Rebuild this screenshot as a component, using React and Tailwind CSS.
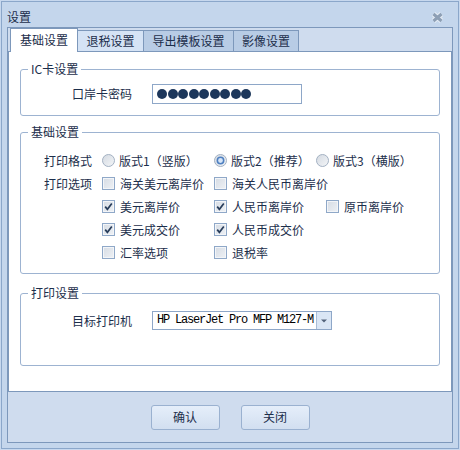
import React from 'react';

// checkbox like the old windows blue theme
const CheckBox = ({ checked }) => (
  <span className="flex h-[13px] w-[13px] shrink-0 items-center justify-center border border-[#8fa8c8] bg-linear-to-br from-[#d6dce4] to-[#eef1f5] shadow-[inset_0_0_0_1px_#f3f5f8]">
    {checked && (
      <svg width="9" height="9" viewBox="0 0 9 9">
        <path d="M1.2 4.6 L3.4 7.3 L7.8 1.4" fill="none" stroke="#283d5b" strokeWidth="1.7" />
      </svg>
    )}
  </span>
);

const Radio = ({ checked }) => (
  <svg width="13" height="13" viewBox="0 0 13 13" className="shrink-0">
    <defs>
      <linearGradient id="rg" x1="0" y1="0" x2="1" y2="1">
        <stop offset="0" stopColor="#d3d9e1" />
        <stop offset="1" stopColor="#f4f6f8" />
      </linearGradient>
    </defs>
    <circle cx="6.5" cy="6.5" r="6" fill="url(#rg)" stroke="#a3b1c2" />
    {checked && <circle cx="6.5" cy="6.5" r="3.2" fill="#d6e5f7" stroke="#4f80c1" strokeWidth="1.6" />}
  </svg>
);

const Option = ({ type, checked, label, width }) => (
  <div className={`flex items-center ${width}`}>
    {type === 'radio' ? <Radio checked={checked} /> : <CheckBox checked={checked} />}
    <span className={type === 'radio' ? 'ml-[4px]' : 'ml-[5px]'}>{label}</span>
  </div>
);

const Group = ({ title, height, className, children }) => (
  <fieldset className={`ml-[11px] w-[420px] rounded-[3px] border border-[#9db3d1] ${height} ${className}`}>
    <legend className="ml-[7px] px-[3px] leading-[14px]">{title}</legend>
    {children}
  </fieldset>
);

const tabs = [
  { label: '退税设置', w: 'w-[66px]', bg: 'bg-[#d5e3f5]' },
  { label: '导出模板设置', w: 'w-[90px]', bg: 'bg-[#b8cce5]' },
  { label: '影像设置', w: 'w-[65px]', bg: 'bg-[#b8cce5]' },
];

export default function App() {
  return (
    <div className="h-[450px] w-[460px] border border-[#c7d8ee] bg-[#c4d6ec] text-[12px] leading-[14px] text-[#1c2e4b] shadow-[inset_0_0_0_1px_#8ba7ca] font-['Noto_Sans_CJK_SC','Noto_Sans',sans-serif]">
      {/* title bar */}
      <div className="flex h-[26px] items-start justify-between pl-[6px] pr-[15px]">
        <span className="pt-[9px]">设置</span>
        <svg width="13" height="11" viewBox="0 0 13 11" className="mt-[11px]">
          <path d="M2.5 2 L10.5 9 M10.5 2 L2.5 9" stroke="#e6edf5" strokeWidth="5" />
          <path d="M2.5 2 L10.5 9 M10.5 2 L2.5 9" stroke="#8d9fb5" strokeWidth="3" />
        </svg>
      </div>

      <div className="mx-[6px] flex h-[416px] flex-col border border-[#7d98bb] bg-[#cfdcee]">
        {/* tabs */}
        <div className="flex h-[24px] items-end">
          <div className="h-[22px] w-[2px] border-b border-[#7d98bb]" />
          <div className="flex h-[24px] w-[68px] items-center justify-center border-x border-t border-[#7d98bb] bg-white pb-[1px]">
            基础设置
          </div>
          {tabs.map((t) => (
            <div
              key={t.label}
              className={`flex h-[22px] items-center justify-center border-y border-r border-[#7d98bb] pb-[1px] ${t.w} ${t.bg}`}
            >
              {t.label}
            </div>
          ))}
          <div className="h-[22px] flex-1 border-b border-[#7d98bb]" />
        </div>

        {/* page */}
        <div className="h-[340px] border-x border-b border-[#7d98bb] bg-white pt-[10px]">
          <Group title="IC卡设置" height="h-[54px]">
            <div className="mt-[8px] flex h-[20px] items-center pl-[51px]">
              <span className="w-[80px]">口岸卡密码</span>
              <div className="flex h-[20px] w-[150px] items-center border border-[#8ea7c8] pl-[4px]">
                {Array.from({ length: 9 }).map((_, i) => (
                  <span key={i} className="mr-[0.5px] h-[10px] w-[10px] rounded-full bg-[#1d375b]" />
                ))}
              </div>
            </div>
          </Group>

          <Group title="基础设置" height="h-[149px]" className="mt-[9px]">
            <div className="pl-[23px] pt-[10px]">
              <div className="flex h-[23px] items-center">
                <span className="w-[58px]">打印格式</span>
                <Option type="radio" label="版式1（竖版）" width="w-[112px]" />
                <Option type="radio" checked label="版式2（推荐）" width="w-[102px]" />
                <Option type="radio" label="版式3（横版）" />
              </div>
              <div className="flex h-[23px] items-center">
                <span className="w-[58px]">打印选项</span>
                <Option label="海关美元离岸价" width="w-[112px]" />
                <Option label="海关人民币离岸价" />
              </div>
              <div className="flex h-[23px] items-center pl-[58px]">
                <Option checked label="美元离岸价" width="w-[112px]" />
                <Option checked label="人民币离岸价" width="w-[112px]" />
                <Option label="原币离岸价" />
              </div>
              <div className="flex h-[23px] items-center pl-[58px]">
                <Option checked label="美元成交价" width="w-[112px]" />
                <Option checked label="人民币成交价" />
              </div>
              <div className="flex h-[23px] items-center pl-[58px]">
                <Option label="汇率选项" width="w-[112px]" />
                <Option label="退税率" />
              </div>
            </div>
          </Group>

          <Group title="打印设置" height="h-[80px]" className="mt-[12px]">
            <div className="mt-[11px] flex h-[19px] items-center pl-[51px]">
              <span className="w-[80px]">目标打印机</span>
              <div className="flex h-[19px] w-[180px] border border-[#8ea7c8]">
                <div className="flex-1 whitespace-nowrap pl-[4px] font-mono text-[12px] leading-[17px] tracking-[-1.2px] text-black">
                  HP LaserJet Pro MFP M127-M
                </div>
                <div className="flex w-[15px] items-center justify-center border-l border-[#a9bdd7] bg-[#dae6f5]">
                  <svg width="6" height="4" viewBox="0 0 6 4">
                    <path d="M0 0.5 H6 L3 3.5 Z" fill="#52627a" />
                  </svg>
                </div>
              </div>
            </div>
          </Group>
        </div>

        {/* buttons */}
        <div className="flex h-[50px] justify-center gap-[21px] pt-[13px]">
          {['确认', '关闭'].map((b) => (
            <button
              key={b}
              className="flex h-[25px] w-[69px] items-center justify-center rounded-[3px] border border-[#9ab1d0] bg-linear-to-b from-[#e5eefa] to-[#d2dff0] pb-[1px]"
            >
              {b}
            </button>
          ))}
        </div>
      </div>
    </div>
  );
}
